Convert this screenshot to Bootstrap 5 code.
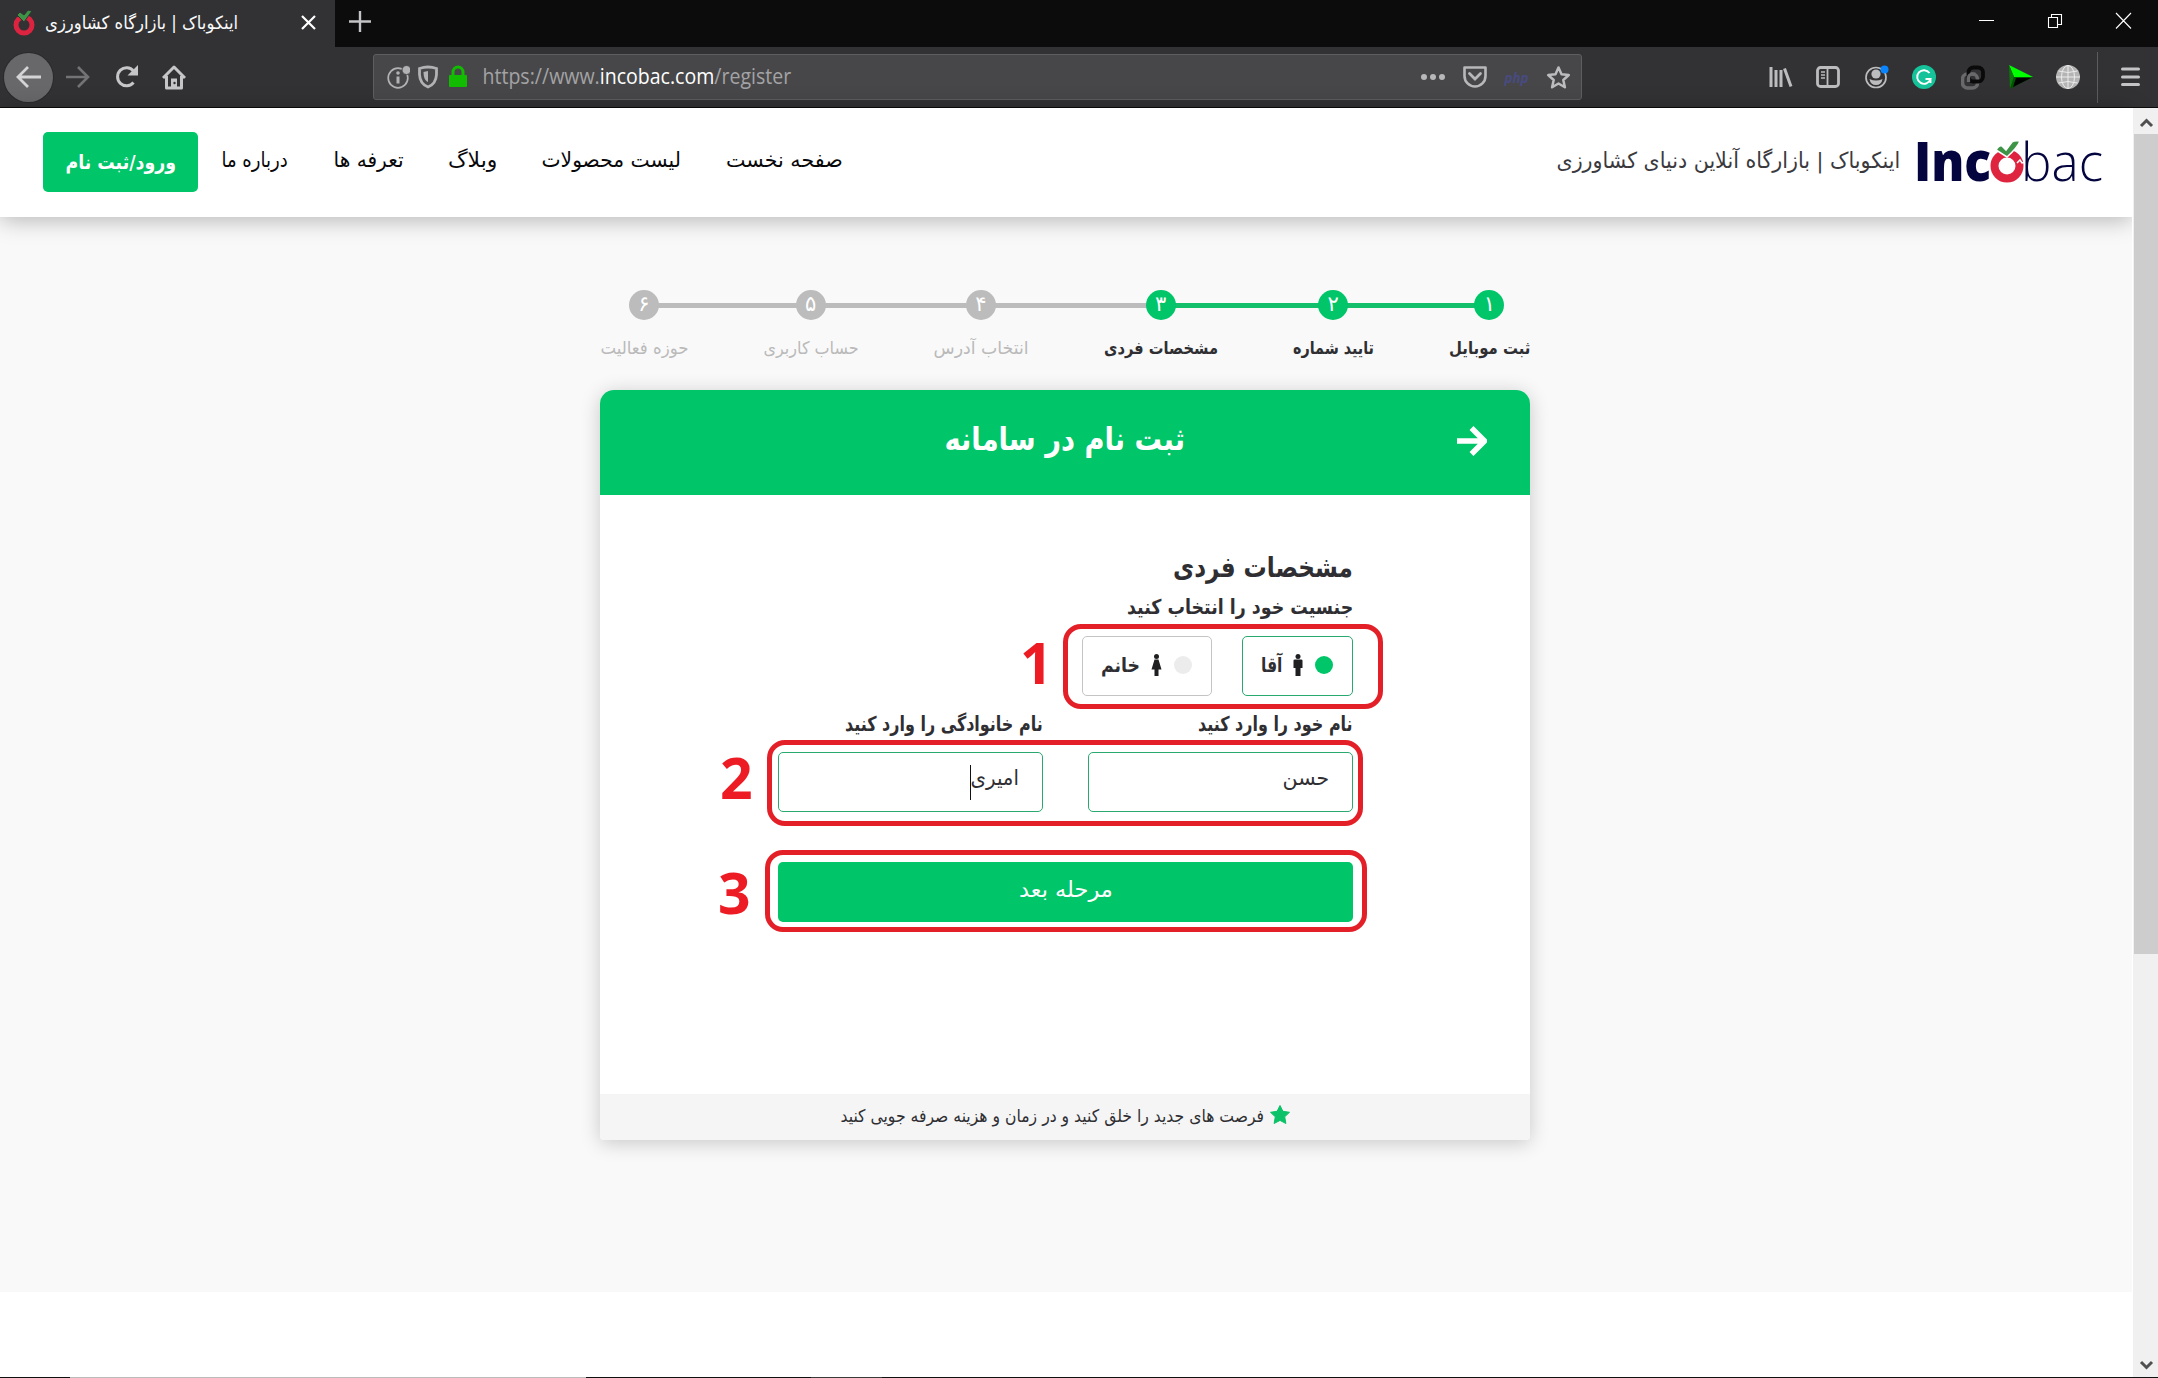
<!DOCTYPE html>
<html lang="fa">
<head>
<meta charset="utf-8">
<title>اینکوباک | بازارگاه کشاورزی</title>
<link href="https://cdn.jsdelivr.net/npm/bootstrap@5.3.0/dist/css/bootstrap.min.css" rel="stylesheet">
<style>
html,body{height:100%;overflow:hidden}
body{font-family:"DejaVu Sans",sans-serif;color:#2f2f33;background:#fff;font-size:21px;line-height:1.3}
svg{display:block;flex:none}
.fit{display:inline-flex;justify-content:center;white-space:nowrap;flex:none}
.fit>span{flex:none;display:block}
.window{height:1378px;width:2158px}
.tabstrip{height:47px;background:#0c0c0d}
.tab-on{width:335px;background:#323234;color:#f9f9fa;padding:0 19px 2px 13px;font-size:18px}
.toolbar{height:61px;background:#323234;border-bottom:1px solid #0c0c0d;padding-left:4px;padding-right:18px}
.back{width:49px;height:49px;background:#68686a;box-shadow:0 0 0 1px #2a2a2c}
.urlbar{width:1209px;height:46px;background:#474749;border:1px solid #5e5e60;border-radius:3px;padding:0 10px 0 13px}
.url{font-family:"Open Sans","Noto Sans",sans-serif;font-size:21px;color:#a3a3a5;margin-left:14px}
.url b{font-weight:400;color:#fff}
.php{font:italic 700 14px "Open Sans",sans-serif;color:#474b80}
.sep{width:1px;height:51px;background:#5c5c5e}
.page{width:2132px}
.site-head{height:109px;background:#fff;padding:0 28px 3px 43px;box-shadow:0 3px 22px rgba(0,0,0,.28);z-index:2;color:#08080a}
.logo{overflow:visible}
.btn-green,.btn-green:hover{background:#00c569;color:#fff;border:0;border-radius:5px;height:60px}
.stage{height:1075px;background:#f9f9f9;padding-top:73px}
.wizard{width:930px;margin:0 auto;transform:translateX(-1px)}
.steps{height:100px}
.track{position:absolute;left:44px;top:13px;width:846px;height:5px;background:#bcbcbc}
.track i{position:absolute;right:0;top:0;height:5px;width:329px;background:#14bf6c}
.num{width:30px;height:30px;background:#bcbcbc;color:#fff;font-size:21px;line-height:29px;position:relative}
.done .num{background:#00c569}
.step{color:#bababa;font-size:17.5px}
.step .fit{margin-top:17px}
.done{color:#2f2f33;font-weight:700}
.done .num{font-weight:400}
.panel{border-radius:14px 14px 4px 4px;box-shadow:0 3px 20px rgba(0,0,0,.2);height:750px;background:#fff}
.panel-top{height:105px;background:#00c569;border-radius:14px 14px 0 0;color:#fff;font-weight:700;font-size:32px;padding:0 43px}
.panel-body{height:599px;padding:53px 177px 0 178px}
.panel-foot{height:46px;background:#f5f5f5;font-size:17.5px;border-radius:0 0 4px 4px;padding-bottom:2px}
.ttl{height:40px;font-size:28px;font-weight:700}
.lbl{height:38px;font-size:20.5px;font-weight:700}
.lbl2{height:57px}
.choice{height:60px;border:1px solid #c4c4c4;border-radius:5px;font-weight:700;font-size:20px;padding:0 19px 2px 18px}
.choice.on,.field{border:1px solid #29a870}
.dot{width:18px;height:18px;background:#ececec}
.on .dot{background:#00c569}
.field{height:60px;width:265px;border-radius:5px;padding:0 23px 6px 0}
.caret{width:1px;height:35px;background:#111;margin-top:6px}
.ring{position:absolute;border:5px solid #e32028;border-radius:18px}
.ringno{position:absolute;font:700 57px/60px "Open Sans",sans-serif;color:#ed1c24}
.scroll{width:26px;background:#f0f0f0;border-left:1px solid #fff;z-index:3}
.thumb{height:820px;width:24px;background:#cdcdcd}
.taskline{height:1px;background:#111;position:absolute;left:0;right:0;bottom:0;z-index:4}
.taskline i{position:absolute;top:0;height:1px}
</style>
<script src="https://cdn.jsdelivr.net/npm/bootstrap@5.3.0/dist/js/bootstrap.bundle.min.js"></script>
</head>
<body>
<div class="window d-flex flex-column position-relative">
  <div class="tabstrip d-flex">
    <div class="tab-on d-flex align-items-center">
      <svg width="22" height="26" viewBox="0 0 22 26"><circle cx="11" cy="15" r="8" fill="none" stroke="#dc2340" stroke-width="5"/><path d="M4 5l3-3 4 3 4-5 4 1-8 11z" fill="#3d9446" stroke="#323234"/></svg>
      <span class="fit" style="margin-left:10px" data-w="193"><span dir="rtl">اینکوباک | بازارگاه کشاورزی</span></span>
      <svg class="ms-auto" width="15" height="15" viewBox="0 0 15 15"><path d="M1 1l13 13M14 1L1 14" stroke="#fff" stroke-width="2.2"/></svg>
    </div>
    <svg style="margin:11px 0 0 14px" width="22" height="22" viewBox="0 0 22 22"><path d="M11 0v21M0 10.500h22" stroke="#c4c4c6" stroke-width="2.400"/></svg>
    <svg class="ms-auto" style="margin:12px 26px 0 0" width="153" height="18" viewBox="0 0 153 18"><path d="M0 8.500h15M69.500 5.500h9v10h-9zM72.500 5v-2.500h10v10h-3.500M137 1l15 15.500M152 1l-15 15.500" fill="none" stroke="#fff" stroke-width="1.100"/></svg>
  </div>

  <div class="toolbar d-flex align-items-center">
    <div class="back rounded-circle d-flex align-items-center justify-content-center">
      <svg width="26" height="24" viewBox="0 0 26 24"><path d="M25 12H3M12 2L2 12l10 10" fill="none" stroke="#d4d4d6" stroke-width="2.800"/></svg>
    </div>
    <svg style="margin-left:13px" width="24" height="24" viewBox="0 0 24 24"><path d="M0 12h22M12 2l10 10-10 10" fill="none" stroke="#737375" stroke-width="2.600"/></svg>
    <svg style="margin-left:25px" width="24" height="24" viewBox="0 0 24 24"><path d="M18.500 17.500A9 9 0 1 1 18.500 6" fill="none" stroke="#c6c6c8" stroke-width="3"/><path d="M23 0v10.500H12.500z" fill="#c6c6c8"/></svg>
    <svg style="margin-left:23px" width="24" height="25" viewBox="0 0 24 25"><path d="M1 13L12 2l11 11M4.500 11v12h15V11" fill="none" stroke="#c6c6c8" stroke-width="3" stroke-linejoin="round"/><path d="M9 23v-9.500h6V23z" fill="#c6c6c8"/><circle cx="12.500" cy="18" r="1.200" fill="#323234"/></svg>
    <div class="urlbar d-flex align-items-center" style="margin-left:187px">
      <svg width="23" height="24" viewBox="0 0 23 24"><circle cx="11" cy="13" r="9.800" fill="none" stroke="#b2b2b4" stroke-width="1.700"/><circle cx="19.500" cy="5" r="4.500" fill="#b2b2b4" stroke="#474749"/><path d="M11 11.500v7" stroke="#b2b2b4" stroke-width="3"/><circle cx="11" cy="8" r="1.800" fill="#b2b2b4"/></svg>
      <svg style="margin-left:8px" width="20" height="24" viewBox="0 0 20 24"><path d="M1.500 3.500Q10 .5 18.500 3.500v6Q18 19 10 22 2 19 1.500 9.500z" fill="none" stroke="#b2b2b4" stroke-width="2.800"/><path d="M10 6v11Q5.500 15 5.500 7z" fill="#b2b2b4"/></svg>
      <svg style="margin-left:10px" width="20" height="24" viewBox="0 0 20 24"><rect x="1" y="10" width="18" height="12" rx="1" fill="#12bc00"/><path d="M5 12V7a5 5 0 0 1 10 0V12" fill="none" stroke="#12bc00" stroke-width="3"/></svg>
      <span class="fit url" data-w="309"><span>https://www.<b>incobac.com</b>/register</span></span>
      <svg class="ms-auto" width="24" height="8" viewBox="0 0 24 8"><g fill="#b8b8ba"><circle cx="3" cy="4" r="3"/><circle cx="12" cy="4" r="3"/><circle cx="21" cy="4" r="3"/></g></svg>
      <svg style="margin-left:18px" width="24" height="22" viewBox="0 0 24 22"><path d="M1.500 1.500h21v8.500a10.500 10.500 0 0 1-21 0z" fill="none" stroke="#b8b8ba" stroke-width="2.600" stroke-linejoin="round"/><path d="M6.500 7.500L12 13l5.500-5.500" fill="none" stroke="#b8b8ba" stroke-width="2.800" stroke-linecap="round"/></svg>
      <span class="fit php" style="margin-left:18px" data-w="24"><span>php</span></span>
      <svg style="margin-left:17px" width="25" height="25" viewBox="0 0 25 25"><path d="M12.500 2.500l3 6.800 7.300.7-5.500 5 1.600 7.300-6.400-3.800-6.400 3.800 1.600-7.300-5.500-5 7.300-.7z" fill="none" stroke="#bcbcbe" stroke-width="2.500" stroke-linejoin="round"/></svg>
    </div>
    <div class="d-flex align-items-center ms-auto">
      <svg width="24" height="22" viewBox="0 0 24 22"><path d="M2 1v20M7 4v17M12 4v17M15.500 2.500l6.500 18" fill="none" stroke="#bcbcbe" stroke-width="3"/></svg>
      <svg style="margin-left:23px" width="24" height="22" viewBox="0 0 24 22"><rect x="1.500" y="1.500" width="21" height="19" rx="3" fill="none" stroke="#bcbcbe" stroke-width="2.800"/><path d="M11.500 1v20" stroke="#bcbcbe" stroke-width="1.800"/><path d="M5 6h4M5 9h4M5 12h4" stroke="#bcbcbe" stroke-width="1.500"/></svg>
      <svg style="margin-left:25px" width="24" height="24" viewBox="0 0 24 24"><circle cx="11" cy="12.500" r="10" fill="none" stroke="#bcbcbe" stroke-width="1.700"/><circle cx="11" cy="9" r="4.600" fill="#bcbcbe"/><path d="M4.500 14q6.500 3 13 0-1 6-6.500 6t-6.500-6z" fill="#bcbcbe"/><circle cx="19.500" cy="4.500" r="4" fill="#0a84ff"/></svg>
      <svg style="margin-left:23px" width="24" height="24" viewBox="0 0 24 24"><circle cx="12" cy="12" r="12" fill="#15c39a"/><path d="M17.500 8A6.800 6.800 0 1 0 18.500 14h-5M18.500 13.500v4.500" fill="none" stroke="#fff" stroke-width="1.900"/></svg>
      <svg style="margin-left:25px" width="24" height="25" viewBox="0 0 24 25"><rect x="1.500" y="9" width="15" height="14" rx="5" fill="none" stroke="#69696b" stroke-width="3.600"/><rect x="7.500" y="2.500" width="14.500" height="14" rx="5" fill="none" stroke="#0a0a0a" stroke-width="3.800"/><path d="M7.500 17V13q0-4 5-4h2" fill="none" stroke="#69696b" stroke-width="3.200"/></svg>
      <svg style="margin-left:24px" width="24" height="24" viewBox="0 0 24 24"><path d="M0 0l24 12H5z" fill="#0f0"/><path d="M0 0l5 12-4 12z" fill="#0b7a0b"/><path d="M5 12h19L1 24z" fill="#050"/><path d="M7 13h15L4 22z" fill="#000"/></svg>
      <svg style="margin-left:23px" width="24" height="24" viewBox="0 0 24 24"><circle cx="12" cy="12" r="12" fill="#b4b4b4"/><g fill="none" stroke="#ececec" stroke-width="1"><ellipse cx="12" cy="12" rx="6.500" ry="11.500"/><path d="M12 0v24M0 12h24M2.500 6q9.500 3 19 0M2.500 18q9.500-3 19 0"/></g></svg>
      <span class="sep" style="margin-left:17px"></span>
      <svg style="margin-left:23px" width="19" height="20" viewBox="0 0 19 20"><path d="M1.500 2h16M1.500 10h16M1.500 17.500h16" stroke="#c4c4c6" stroke-width="3" stroke-linecap="round"/></svg>
    </div>
  </div>

  <div class="d-flex flex-grow-1">
    <div class="page">
      <header class="site-head d-flex align-items-center position-relative">
        <button class="btn btn-green p-0 d-flex align-items-center justify-content-center fw-bold" style="width:155px;font-size:20px;margin-top:1px"><span class="fit" data-w="110"><span dir="rtl">ورود/ثبت نام</span></span></button>
        <nav class="d-flex align-items-center" style="margin-left:24px;gap:45px">
          <span class="fit" data-w="66"><span dir="rtl">درباره ما</span></span>
          <span class="fit" data-w="70"><span dir="rtl">تعرفه ها</span></span>
          <span class="fit" data-w="49"><span dir="rtl">وبلاگ</span></span>
          <span class="fit" data-w="139"><span dir="rtl">لیست محصولات</span></span>
          <span class="fit" data-w="117"><span dir="rtl">صفحه نخست</span></span>
        </nav>
        <span class="fit ms-auto" style="color:#3a3a3e;font-size:22px" data-w="344"><span dir="rtl">اینکوباک | بازارگاه آنلاین دنیای کشاورزی</span></span>
        <svg class="logo" style="margin-left:16px" width="188" height="60" viewBox="0 -8 188 60" font-family="Open Sans,sans-serif" fill="#04043f">
          <text x="-2" y="42" font-size="55" font-weight="800" textLength="77" lengthAdjust="spacingAndGlyphs">Inc</text>
          <circle cx="91" cy="27" r="12.500" fill="none" stroke="#df2440" stroke-width="8"/>
          <path d="M80 11q3-5 6-4l4 4 6-8q3-2 8-1-2 6-13 16z" fill="#3d9446" stroke="#fff" stroke-width="1.500"/>
          <path d="M101 24l3-3 2 3 4-1" fill="none" stroke="#fff" stroke-width="1.500"/>
          <text x="105" y="42" font-size="54" font-weight="300" textLength="82" lengthAdjust="spacingAndGlyphs">bac</text>
        </svg>
      </header>

      <main class="stage">
        <div class="wizard">
          <div class="steps position-relative d-flex justify-content-between">
            <div class="track"><i></i></div>
            <div class="step d-flex flex-column align-items-center"><span class="num rounded-circle text-center">۶</span><span class="fit" data-w="88"><span dir="rtl">حوزه فعالیت</span></span></div>
            <div class="step d-flex flex-column align-items-center"><span class="num rounded-circle text-center">۵</span><span class="fit" data-w="95"><span dir="rtl">حساب کاربری</span></span></div>
            <div class="step d-flex flex-column align-items-center"><span class="num rounded-circle text-center">۴</span><span class="fit" data-w="95"><span dir="rtl">انتخاب آدرس</span></span></div>
            <div class="step done d-flex flex-column align-items-center"><span class="num rounded-circle text-center">۳</span><span class="fit" data-w="114"><span dir="rtl">مشخصات فردی</span></span></div>
            <div class="step done d-flex flex-column align-items-center"><span class="num rounded-circle text-center">۲</span><span class="fit" data-w="81"><span dir="rtl">تایید شماره</span></span></div>
            <div class="step done d-flex flex-column align-items-center"><span class="num rounded-circle text-center">۱</span><span class="fit" data-w="81"><span dir="rtl">ثبت موبایل</span></span></div>
          </div>

          <section class="panel">
            <div class="panel-top d-flex align-items-center justify-content-between">
              <span style="width:31px"></span>
              <span class="fit" style="margin-bottom:5px" data-w="240"><span dir="rtl">ثبت نام در سامانه</span></span>
              <svg style="margin-bottom:3px" width="31" height="32" viewBox="0 0 31 32"><path d="M1 16h27M15.500 3L28.500 16l-13 13" fill="none" stroke="#fff" stroke-width="5.500" stroke-linejoin="round"/></svg>
            </div>
            <div class="panel-body position-relative">
              <div class="ttl d-flex justify-content-end align-items-center"><span class="fit" data-w="180"><span dir="rtl">مشخصات فردی</span></span></div>
              <div class="lbl d-flex justify-content-end align-items-center"><span class="fit" data-w="226"><span dir="rtl">جنسیت خود را انتخاب کنید</span></span></div>
              <div class="d-flex justify-content-end" style="gap:30px;margin-top:10px">
                <div class="choice d-flex align-items-center" style="width:130px"><span class="fit" data-w="39"><span dir="rtl">خانم</span></span>
                  <svg style="margin-left:11px" width="11" height="22" viewBox="0 0 11 22"><g fill="#1f1f22"><circle cx="5.500" cy="2.500" r="2.500"/><path d="M3.500 5.500h4l3 10H7.500V22h-4v-6.500H.5z"/></g></svg>
                  <span class="dot rounded-circle ms-auto"></span></div>
                <div class="choice on d-flex align-items-center" style="width:111px"><span class="fit" data-w="21"><span dir="rtl">آقا</span></span>
                  <svg style="margin-left:11px" width="10" height="22" viewBox="0 0 10 22"><g fill="#1f1f22"><circle cx="5" cy="2.500" r="2.500"/><path d="M2 5.500h6q1.500 0 1.500 1V14H7.500v8h-5v-8H.5V6.500q0-1 1.500-1z"/></g></svg>
                  <span class="dot rounded-circle ms-auto"></span></div>
              </div>
              <div class="lbl lbl2 d-flex justify-content-between align-items-center">
                <span style="width:265px" class="d-flex justify-content-end"><span class="fit" data-w="198"><span dir="rtl">نام خانوادگی را وارد کنید</span></span></span>
                <span class="fit" data-w="155"><span dir="rtl">نام خود را وارد کنید</span></span>
              </div>
              <div class="d-flex justify-content-between" style="margin-top:-1px">
                <div class="field d-flex align-items-center justify-content-end"><span class="caret"></span><span class="fit" data-w="48"><span dir="rtl">امیری</span></span></div>
                <div class="field d-flex align-items-center justify-content-end"><span class="fit" data-w="47"><span dir="rtl">حسن</span></span></div>
              </div>
              <button class="btn btn-green w-100 p-0 d-flex align-items-center justify-content-center" style="margin-top:50px;font-size:22px"><span class="fit" style="margin-bottom:5px" data-w="94"><span dir="rtl">مرحله بعد</span></span></button>

              <div class="ring" style="left:463px;top:129px;width:320px;height:85px"></div>
              <div class="ring" style="left:167px;top:245px;width:596px;height:86px"></div>
              <div class="ring" style="left:165px;top:355px;width:602px;height:82px"></div>
              <span class="ringno" style="left:420px;top:137px">1</span>
              <span class="ringno" style="left:120px;top:252px">2</span>
              <span class="ringno" style="left:118px;top:367px">3</span>
            </div>
            <div class="panel-foot d-flex align-items-center justify-content-center" style="gap:6px">
              <span class="fit" data-w="424"><span dir="rtl">فرصت های جدید را خلق کنید و در زمان و هزینه صرفه جویی کنید</span></span>
              <svg style="margin-bottom:3px" width="20" height="19" viewBox="0 0 20 19"><path d="M10 .5l2.900 5.800 6.600 1-4.800 4.500 1.200 6.700L10 15.400l-5.900 3.100 1.200-6.700L.5 7.300l6.600-1z" fill="#0bc268" stroke="#0bc268" stroke-linejoin="round"/></svg>
            </div>
          </section>
        </div>
      </main>
    </div>
    <div class="scroll d-flex flex-column align-items-center">
      <svg width="24" height="26" viewBox="0 0 24 26"><path d="M7 18l5.500-5.500L18 18" fill="none" stroke="#505050" stroke-width="3"/></svg>
      <div class="thumb"></div>
      <svg class="mt-auto" width="24" height="26" viewBox="0 0 24 26"><path d="M7 10l5.500 5.500L18 10" fill="none" stroke="#505050" stroke-width="3"/></svg>
    </div>
  </div>
  <div class="taskline"><i style="left:70px;width:516px;background:#bbb"></i><i style="left:811px;width:71px;background:#3a3a3a"></i></div>
</div>
<script>
// Condense or widen each label so that it fills the width given in data-w.
document.querySelectorAll('.fit').forEach(function (el) {
  var inner = el.firstElementChild, natural = inner.offsetWidth, w = +el.dataset.w;
  el.style.width = w + 'px';
  inner.style.transform = 'scaleX(' + (w / natural) + ')';
});
</script>
</body>
</html>
